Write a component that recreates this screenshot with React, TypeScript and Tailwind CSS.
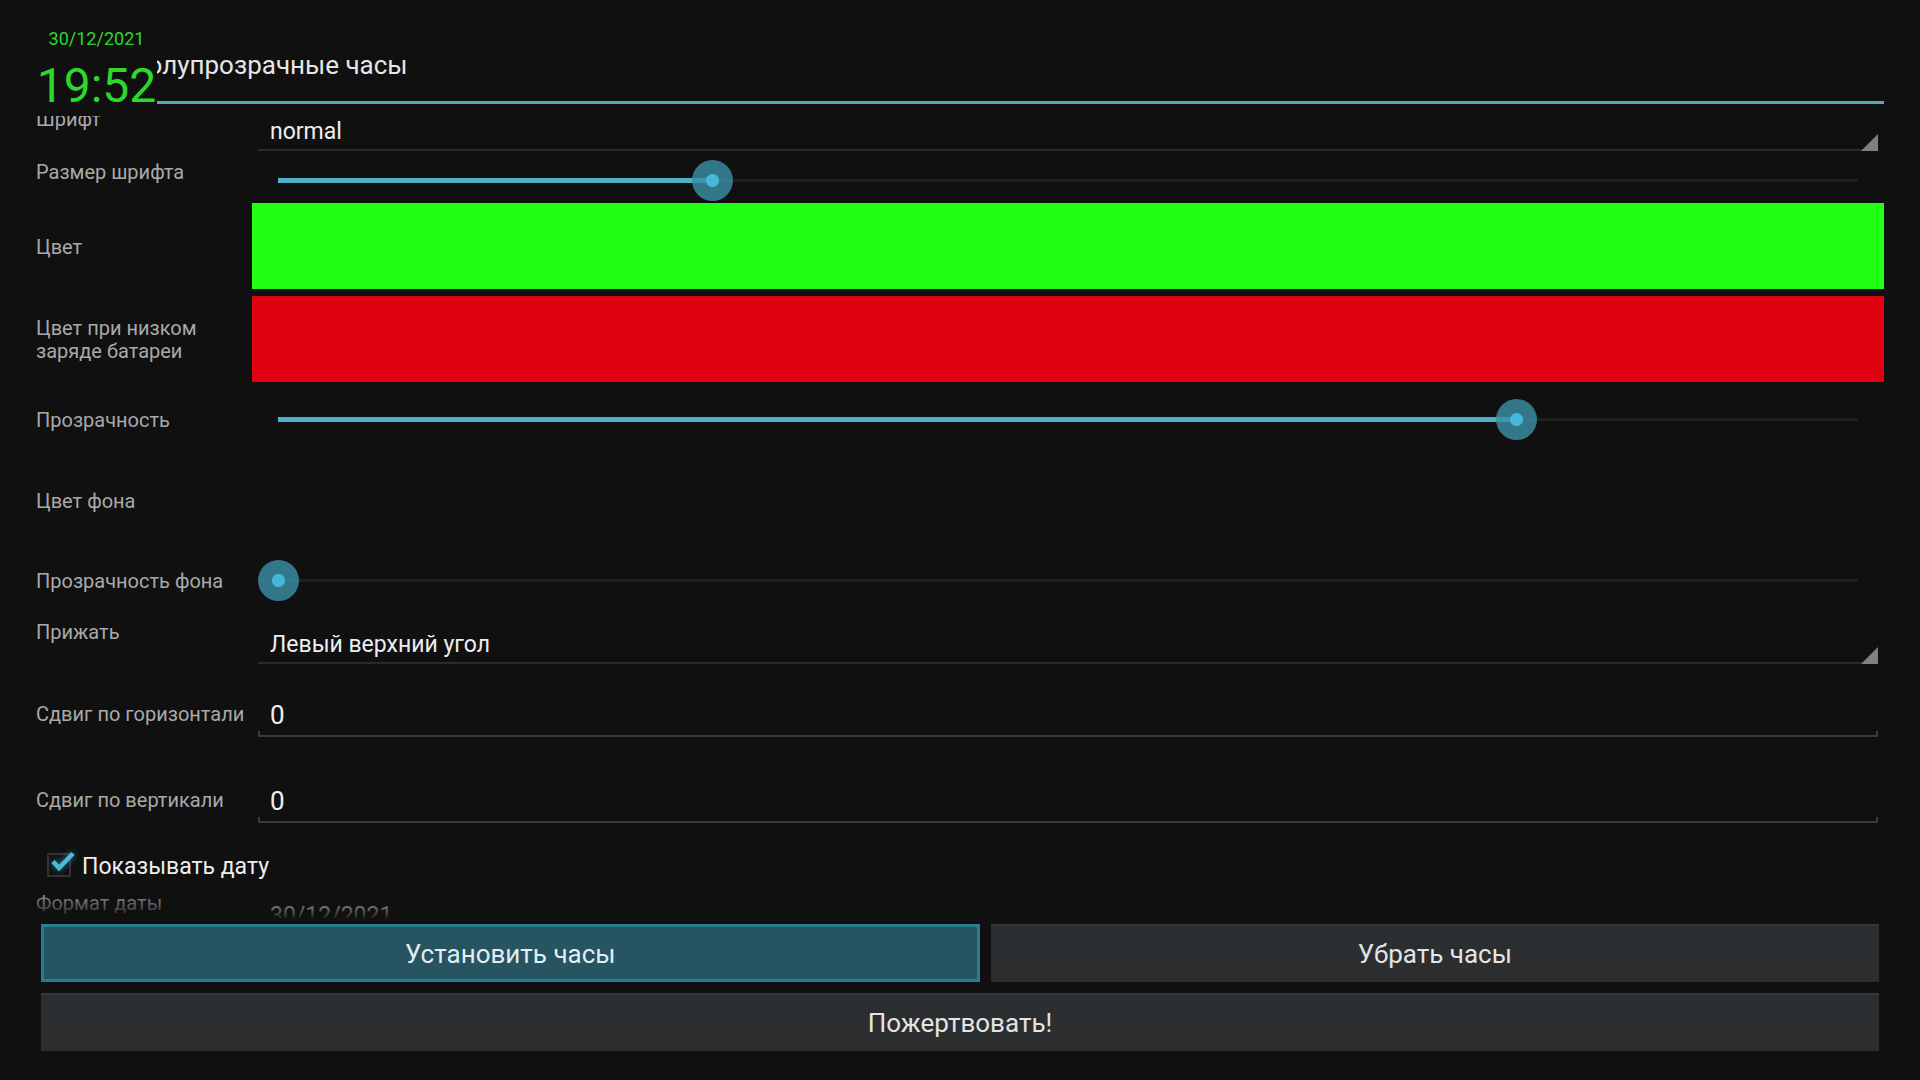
import { useState } from "react";
import type { ReactNode } from "react";

const corners = ["Левый верхний угол", "Правый верхний угол", "Левый нижний угол", "Правый нижний угол"];

function Row({ label, id, top, className, children }: {
  label: string;
  id: string;
  top?: boolean;
  className: string;
  children: ReactNode;
}) {
  return (
    <div className={`flex shrink-0 ${top ? "items-start" : "items-center"} ${className}`}>
      <label htmlFor={id} className={`w-[216px] shrink-0 text-[20px] leading-[23px] text-[#a9a9a9] ${top ? "pt-1" : "pt-0.5"}`}>
        {label}
      </label>
      <div className="min-w-0 flex-1">{children}</div>
    </div>
  );
}

function Spinner({ id, options }: { id: string; options: string[] }) {
  return (
    <div className="relative mx-1.5">
      <select id={id} className="block h-[47px] w-full appearance-none border-b-2 border-[#2a2a2a] bg-transparent pt-2.5 pl-3 text-[23px] leading-[28px] text-[#eeeeee] outline-none">
        {options.map((o) => (
          <option key={o} className="bg-[#222222]">{o}</option>
        ))}
      </select>
      <svg viewBox="0 0 17 17" className="pointer-events-none absolute right-0 bottom-0 h-[17px] w-[17px]">
        <path d="M17 0V17H0Z" fill="#808080" />
      </svg>
    </div>
  );
}

function Slider({ id, max, initial }: { id: string; max: number; initial: number }) {
  const [value, setValue] = useState(initial);
  return (
    <div className="mx-1.5 grid items-center">
      <div className="col-start-1 row-start-1 mx-5 h-[3px] bg-[#202020]" />
      <div className="col-start-1 row-start-1 mx-5">
        <div className="h-[5px] bg-[#50b0c8]" style={{ width: `${(value / max) * 100}%` }} />
      </div>
      <input
        id={id}
        type="range"
        min={0}
        max={max}
        value={value}
        onChange={(e) => setValue(Number(e.target.value))}
        className="z-10 col-start-1 row-start-1 h-[42px] w-full appearance-none bg-transparent outline-none [&::-webkit-slider-thumb]:h-[41px] [&::-webkit-slider-thumb]:w-[41px] [&::-webkit-slider-thumb]:appearance-none [&::-webkit-slider-thumb]:rounded-full [&::-webkit-slider-thumb]:bg-[radial-gradient(circle,#45b8d8_6px,#3a8fa5d0_7px)]"
      />
    </div>
  );
}

function NumberField({ id }: { id: string }) {
  const [value, setValue] = useState("0");
  return (
    <div className="relative mx-1.5 after:pointer-events-none after:absolute after:inset-x-0 after:bottom-0 after:h-1.5 after:border-x-2 after:border-b-2 after:border-[#3a3a3a]">
      <input
        id={id}
        type="text"
        inputMode="numeric"
        value={value}
        onChange={(e) => setValue(e.target.value)}
        className="block h-12 w-full bg-transparent pt-1 pl-3 text-[26px] leading-[30px] text-[#eeeeee] outline-none"
      />
    </div>
  );
}

function CheckRow() {
  const [checked, setChecked] = useState(true);
  return (
    <label className="flex h-[46px] shrink-0 items-center pl-[11px] text-[23px] leading-[28px] text-[#eeeeee]">
      <span className="relative mr-[11px] h-6 w-6">
        <input
          type="checkbox"
          checked={checked}
          onChange={(e) => setChecked(e.target.checked)}
          className="block h-6 w-6 appearance-none border-2 border-[#333333] bg-[#111111]"
        />
        {checked && (
          <svg viewBox="0 0 32 28" className="pointer-events-none absolute -top-1 left-0 h-7 w-8 drop-shadow-[0_0_3px_#1b7f98]">
            <path d="M6 12.5L12 19L26 4.5" fill="none" stroke="#4fbad6" strokeWidth="4.5" />
          </svg>
        )}
      </span>
      <span className="pt-1">Показывать дату</span>
    </label>
  );
}

const plainButton = "h-[58px] border-t-2 border-[#35383a] bg-linear-to-b from-[#2a2f32] to-[#2d2d2e] px-[3px] text-[#e4e4e4]";

export default function App() {
  return (
    <div className="relative flex h-screen flex-col overflow-hidden bg-[#101010] px-9 pt-6 font-[Roboto,'Noto_Sans',sans-serif]">
      <header className="flex h-20 shrink-0 items-center border-t border-b-[3px] border-t-[#151515] border-b-[#55a9ba] pt-1 pl-[93px]">
        <h1 className="text-[26px] leading-[32px] text-[#e6e6e6]">Полупрозрачные часы</h1>
      </header>

      {/* floating clock preview, drawn over the settings */}
      <div className="absolute top-6 left-9 z-20 flex h-[92px] w-[121px] flex-col items-center gap-[9px] bg-[#101010] pt-1 text-[#2bd92b]">
        <div className="text-[18px] leading-[21px]">30/12/2021</div>
        <div className="text-[48px] leading-[56px]">19:52</div>
      </div>

      <main className="relative flex min-h-0 flex-1 flex-col overflow-hidden">
        <Row label="Шрифт" id="font" top className="h-[53px]">
          <Spinner id="font" options={["normal", "sans", "serif", "monospace"]} />
        </Row>
        <Row label="Размер шрифта" id="size" top className="h-[46px]">
          <div className="pt-0.5">
            <Slider id="size" max={40} initial={11} />
          </div>
        </Row>
        <Row label="Цвет" id="color" className="mb-[7px] h-[86px]">
          <button id="color" className="block h-[86px] w-full bg-[#21ff16]" />
        </Row>
        <Row label="Цвет при низком заряде батареи" id="low-color" className="h-[86px]">
          <button id="low-color" className="block h-[86px] w-full bg-[#df0012]" />
        </Row>
        <Row label="Прозрачность" id="alpha" className="h-[75px]">
          <Slider id="alpha" max={255} initial={200} />
        </Row>
        <Row label="Цвет фона" id="bg-color" className="h-[86px]">
          <button id="bg-color" className="block h-[86px] w-full bg-transparent" />
        </Row>
        <Row label="Прозрачность фона" id="bg-alpha" className="h-[74px]">
          <Slider id="bg-alpha" max={255} initial={0} />
        </Row>
        <Row label="Прижать" id="corner" top className="h-[53px]">
          <Spinner id="corner" options={corners} />
        </Row>
        <Row label="Сдвиг по горизонтали" id="shift-x" className="h-[86px]">
          <NumberField id="shift-x" />
        </Row>
        <Row label="Сдвиг по вертикали" id="shift-y" className="h-[86px]">
          <NumberField id="shift-y" />
        </Row>
        <CheckRow />
        <Row label="Формат даты" id="date-format" top className="h-[53px]">
          <Spinner id="date-format" options={["30/12/2021", "12/30/2021", "2021-12-30"]} />
        </Row>
        <div className="pointer-events-none absolute inset-x-0 bottom-0 h-[30px] bg-linear-to-t from-[#101010]/90 to-transparent" />
      </main>

      <footer className="flex shrink-0 flex-col gap-[11px] px-[5px] pt-1.5 pb-[29px] text-[26px] leading-[32px]">
        <div className="flex gap-[11px]">
          <button className="h-[58px] flex-auto bg-[#265460] pt-0.5 text-[#e2eef1] inset-ring-3 inset-ring-[#277f90]">Установить часы</button>
          <button className={`flex-auto ${plainButton}`}>Убрать часы</button>
        </div>
        <button className={plainButton}>Пожертвовать!</button>
      </footer>
    </div>
  );
}
